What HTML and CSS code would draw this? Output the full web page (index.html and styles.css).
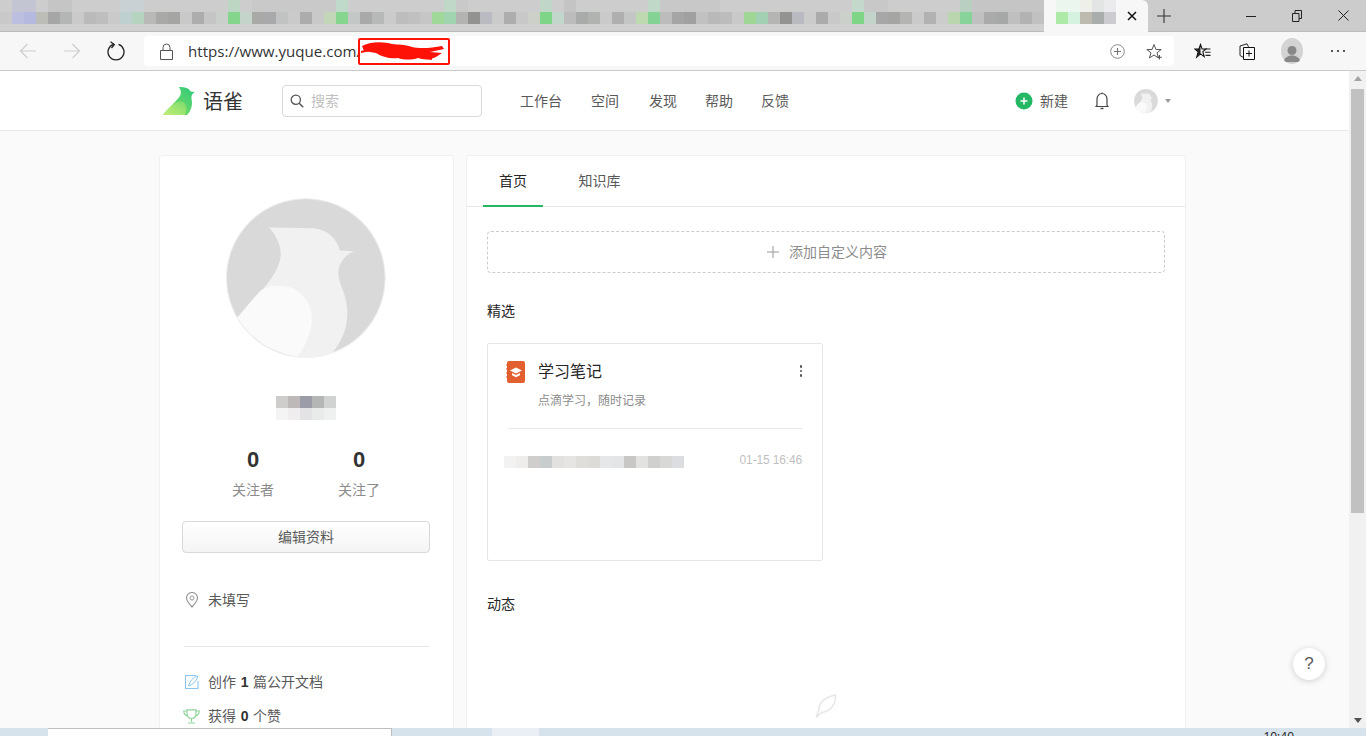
FILE: index.html
```html
<!DOCTYPE html>
<html lang="zh-CN">
<head>
<meta charset="utf-8">
<title>语雀</title>
<link rel="stylesheet" href="styles.css">
</head>
<body>
<div class="tabstrip">
  <div class="tabs-blur"></div>
  <div class="tab-active">
    <span class="tab-blur"></span>
    <svg class="tab-x" width="10" height="10" viewBox="0 0 10 10"><path d="M1 1l8 8M9 1l-8 8" stroke="#111" stroke-width="1.5" fill="none"/></svg>
  </div>
  <div class="newtab"><svg width="14" height="14" viewBox="0 0 14 14"><path d="M7 0v14M0 7h14" stroke="#333" stroke-width="1.1" fill="none"/></svg></div>
  <div class="winctl">
    <span class="winbtn"><svg width="10" height="10" viewBox="0 0 10 10"><path d="M0 5.5h10" stroke="#222" fill="none"/></svg></span>
    <span class="winbtn"><svg width="10" height="12" viewBox="0 0 10 12"><path d="M.5 3.5h6.5v8H.5zM3 3.5V.5h6.5v8H7" stroke="#222" fill="none"/></svg></span>
    <span class="winbtn"><svg width="11" height="11" viewBox="0 0 11 11"><path d="M.5.5l10 10M10.500.5l-10 10" stroke="#222" fill="none"/></svg></span>
  </div>
</div>

<div class="toolbar">
  <span class="tbtn"><svg width="18" height="16" viewBox="0 0 18 16"><path d="M17 8H1.500M8.500 1L1.500 8l7 7" stroke="#cdcdcd" stroke-width="1.200" fill="none"/></svg></span>
  <span class="tbtn"><svg width="18" height="16" viewBox="0 0 18 16"><path d="M1 8h15.500M9.500 1l7 7-7 7" stroke="#cdcdcd" stroke-width="1.200" fill="none"/></svg></span>
  <span class="tbtn"><svg width="18" height="20" viewBox="0 0 18 20"><path d="M6.500 3.300A8 8 0 1 0 11.500 3.300" stroke="#222" stroke-width="1.300" fill="none"/><path d="M3.500 .8L7.300 3.600 4.500 7" stroke="#222" stroke-width="1.300" fill="none"/></svg></span>
  <div class="address">
    <svg class="lock" width="13" height="17" viewBox="0 0 13 17"><path d="M3 7V4.500a3.500 3.500 0 0 1 7 0V7M.5 7.500h12v9H.5z" stroke="#555" stroke-width="1" fill="none"/></svg>
    <span class="url">https://www.yuque.com/</span>
    <span class="redact"><svg width="88" height="23" viewBox="0 0 88 23"><path d="M2 6C12 1 24 2 32 4c6 1 12 0 20 3 8 2 20 1 30-1l2 3-14 3 12 1-6 4c-6 3-12 3-18 1-6 2-14 2-20 0-8 1-16-1-22-5L4 11z" fill="#fe1208"/><path d="M1 12l18-4M60 17l12 2" stroke="#fe1208" stroke-width="2" fill="none"/></svg></span>
    <span class="addr-icons">
      <svg width="15" height="15" viewBox="0 0 15 15"><circle cx="7.500" cy="7.500" r="6.800" stroke="#888" fill="none"/><path d="M7.500 4v7M4 7.500h7" stroke="#777" stroke-width="1.200" fill="none"/></svg>
      <svg width="17" height="17" viewBox="0 0 17 17"><path d="M8 1.500l2 5h5.200l-4.200 3.300 1.600 5.200L8 12l-4.600 3 1.600-5.200L.8 6.500H6z" stroke="#555" fill="none"/><path d="M13.500 12v4.500M11.200 14.300h4.600" stroke="#555" fill="none"/></svg>
    </span>
  </div>
  <div class="tb-right">
    <span class="tbtn"><svg width="17" height="17" viewBox="0 0 17 17"><path d="M6.500 1.500l1.600 4.500h3.900L8.800 8.700l1.400 5-3.700-2.800-3.800 3.300L4.200 8.700.8 6h4.100z" stroke="#111" stroke-width="1.100" fill="none"/><path d="M6.500 1.500L4.900 6H.8l3.400 2.700-1.500 5.500 3.800-3.300z" fill="#222"/><path d="M11 6h5.500M11 9.200h5.500M11.500 12.400h5" stroke="#222" stroke-width="1.100" fill="none"/></svg></span>
    <span class="tbtn"><svg class="coll-icon" width="16" height="17" viewBox="0 0 16 17"><path d="M4.500 14.500L1 12.500 1 3 8 .8l1.500 3" stroke="#222" fill="none"/><path d="M4.500 4.500h11v12h-11zM10 7.500v6M7 10.500h6" stroke="#111" fill="none"/></svg></span>
    <span class="profile"><svg width="22" height="22" viewBox="0 0 22 22"><circle cx="11" cy="8.500" r="4.500" fill="#888"/><path d="M2.500 20c1-5 5-6.500 8.500-6.500s7.500 1.500 8.500 6.500z" fill="#888"/></svg></span>
    <span class="tbtn"><svg width="16" height="4" viewBox="0 0 16 4"><circle cx="2" cy="2" r="1.100" fill="#333"/><circle cx="8" cy="2" r="1.100" fill="#333"/><circle cx="14" cy="2" r="1.100" fill="#333"/></svg></span>
  </div>
</div>

<div class="main">
  <div class="page">
    <header class="header">
      <svg class="logo" width="32" height="28" viewBox="0 0 32 28"><defs><linearGradient id="lg1" x1="1" y1="0" x2="0" y2="1"><stop offset="0" stop-color="#2cc97c"/><stop offset="1" stop-color="#8ee05e"/></linearGradient><linearGradient id="lg2" x1="1" y1="0" x2="0" y2="1"><stop offset="0" stop-color="#7bdc6c"/><stop offset="1" stop-color="#c4ee78"/></linearGradient></defs><path d="M16 0C22 0 26 1 27.500 4.500L32 5C29 6.500 28 9 28.500 12 30 18 28 24 24 28H0C4 22 12 16 17 9 18.500 6 18 3 16 0Z" fill="url(#lg1)"/><path d="M0 28C6 21 11 15 17 14.500 23 14 25.500 22 21.500 28Z" fill="url(#lg2)"/></svg>
      <span class="brand">语雀</span>
      <div class="search">
        <svg width="14" height="14" viewBox="0 0 14 14"><circle cx="5.800" cy="5.800" r="4.600" stroke="#555" stroke-width="1.300" fill="none"/><path d="M9.200 9.200l4 4" stroke="#555" stroke-width="1.500" fill="none"/></svg>
        <span class="placeholder">搜索</span>
      </div>
      <nav class="nav">
        <a class="nav-item nav-w1">工作台</a>
        <a class="nav-item nav-w2">空间</a>
        <a class="nav-item">发现</a>
        <a class="nav-item">帮助</a>
        <a class="nav-item">反馈</a>
      </nav>
      <div class="hdr-right">
        <span class="new-btn"><svg width="18" height="18" viewBox="0 0 18 18"><circle cx="9" cy="9" r="8.500" fill="#25b864"/><path d="M9 5.500v7M5.500 9h7" stroke="#fff" stroke-width="1.500" fill="none"/></svg><span class="new-label">新建</span></span>
        <svg class="bell" width="14" height="18" viewBox="0 0 14 18"><path d="M1 14.500h12l-1-1.500V7a5 5.500 0 0 0-10 0v6z" stroke="#444" stroke-width="1.200" fill="none"/><path d="M5.500 16.500h3" stroke="#444" stroke-width="1.400" fill="none"/><path d="M7 .5v1.500" stroke="#444" fill="none"/></svg>
        <svg class="mini-avatar" width="24" height="24" viewBox="200 55 477 478"><use href="#bird"/></svg>
        <span class="caret"></span>
      </div>
    </header>

    <div class="cols">
      <aside class="card profile-card">
        <svg class="avatar" width="160" height="160" viewBox="200 55 477 478">
          <g id="bird">
            <circle cx="438" cy="294" r="237" fill="#d9d9d9" stroke="#eeeeee" stroke-width="3"/>
            <path d="M328 143L460 145C500 147 530 175 540 212L582 214C555 225 535 250 535 280 537 320 562 340 562 400 562 450 540 490 517 518 490 528 460 533 438 532 380 533 290 490 234 412 290 350 365 280 363 220 362 190 345 160 328 143Z" fill="#f1f1f1"/>
            <path d="M234 412C260 380 290 345 305 330 330 315 370 313 400 325 440 345 458 385 456 420 455 460 435 500 413 528 340 520 270 475 234 412Z" fill="#fafafa"/>
          </g>
        </svg>
        <div class="name-blur"></div>
        <div class="stats">
          <div class="stat"><b class="stat-num">0</b><span class="stat-label">关注者</span></div>
          <div class="stat"><b class="stat-num">0</b><span class="stat-label">关注了</span></div>
        </div>
        <button class="edit-btn">编辑资料</button>
        <div class="info-row location">
          <svg width="14" height="16" viewBox="0 0 14 16"><path d="M7 15C3.500 11 1.500 8.500 1.500 6a5.500 5.500 0 0 1 11 0c0 2.500-2 5-5.500 9z" stroke="#999" stroke-width="1.200" fill="none"/><circle cx="7" cy="6" r="2" stroke="#999" fill="none"/></svg>
          <span>未填写</span>
        </div>
        <div class="rule"></div>
        <div class="info-row doc-row">
          <svg width="14" height="14" viewBox="0 0 14 14"><path d="M11 .5H.5v13h12.500V6" stroke="#8cc4ee" stroke-width="1.100" fill="none"/><path d="M13 1C8 2 5 6 3.500 11 7 10 11 7 13 1z" stroke="#8cc4ee" fill="none"/></svg>
          <span>创作 <b>1</b> 篇公开文档</span>
        </div>
        <div class="info-row like-row">
          <svg width="17" height="15" viewBox="0 0 17 15"><path d="M4 .8h9v4c0 3-2 4.700-4.500 4.700S4 7.800 4 4.800zM4 2H.8c0 3 1 4.500 4 5M13 2h3.200c0 3-1 4.500-4 5M8.500 9.500v3.500M5 14h7" stroke="#8fd398" stroke-width="1.200" fill="none"/></svg>
          <span>获得 <b>0</b> 个赞</span>
        </div>
      </aside>

      <section class="card content-card">
        <div class="tabs">
          <span class="tab tab-on">首页</span>
          <span class="tab">知识库</span>
        </div>
        <div class="content-body">
          <div class="add-box"><svg width="12" height="12" viewBox="0 0 12 12"><path d="M6 0v12M0 6h12" stroke="#999" fill="none"/></svg><span class="add-label">添加自定义内容</span></div>
          <h3 class="section-title">精选</h3>
          <div class="book">
            <div class="book-head">
              <svg class="book-icon" width="20" height="22" viewBox="0 0 20 22"><rect x="1" y="0" width="18" height="22" rx="2" fill="#e25f30"/><path d="M0 4h2M0 8h2M0 12h2M0 16h2" stroke="#e25f30" fill="none"/><path d="M10 6.500l6 3-6 3-6-3z" fill="#fff"/><path d="M6 12l4 2 4-2v2.300l-4 2-4-2z" fill="#fff"/></svg>
              <div class="book-titles">
                <div class="book-title">学习笔记</div>
                <div class="book-sub">点滴学习，随时记录</div>
              </div>
              <span class="kebab"><i></i><i></i><i></i></span>
            </div>
            <div class="book-rule"></div>
            <div class="book-doc">
              <div class="doc-blur"></div>
              <span class="doc-date">01-15 16:46</span>
            </div>
          </div>
          <h3 class="section-title feed-title">动态</h3>
          <div class="empty"><svg width="22" height="24" viewBox="0 0 22 24"><path d="M1.500 23C2 20 3 18 4 16 3 10 9 3 20.500 1 21 9 17 17 7 18.500 5 19.500 3.500 21 1.500 23z" stroke="#e6e6e6" stroke-width="1.500" fill="none"/></svg></div>
        </div>
      </section>
    </div>
  </div>
  <div class="scrollbar">
    <span class="arrow-up"></span>
    <span class="thumb"></span>
    <span class="arrow-down"></span>
  </div>
  <div class="help">?</div>
</div>

<footer class="taskbar">
  <div class="task-input"></div>
  <div class="task-seg"></div>
  <span class="clock">10:40</span>
</footer>
</body>
</html>
```
FILE: styles.css
```css
* { box-sizing: border-box; }
html, body { margin: 0; height: 100%; }
body {
  width: 1366px; height: 736px; overflow: hidden;
  display: flex; flex-direction: column;
  font-family: "Noto Sans CJK SC", "Liberation Sans", sans-serif;
  font-size: 14px; color: #595959; background: #fafafa;
}
svg { display: block; flex: none; }

/* tab strip */
.tabstrip { height: 32px; flex: none; display: flex; background: #cccccc; border-bottom: 1px solid #bcbcbc; }
.tabs-blur {
  width: 1044px; height: 31px; flex: none;
  background-color: #d0d0d0;
  background-repeat: no-repeat;
  background-size: 1044px 12px, 1044px 12px;
  background-position: 0 12px, 0 0;
  background-image:
    linear-gradient(90deg,#c9c9c9 0 12px,#bcbfe0 0 24px,#b5b8df 0 36px,#bdbdb8 0 48px,#a6a6a6 0 60px,#b4b6b6 0 72px,#cacaca 0 84px,#bababa 0 96px,#bebebe 0 108px,#cacaca 0 120px,#bfd0d0 0 132px,#b6d3bf 0 144px,#b9b9b7 0 156px,#a9a9a7 0 168px,#a5a5a4 0 180px,#c9c9c9 0 192px,#adadad 0 204px,#c5c5c5 0 216px,#cbcfcb 0 228px,#86d58c 0 240px,#c4d4ca 0 252px,#a9a9a7 0 264px,#a9a8ab 0 276px,#c0c3c2 0 288px,#cacaca 0 300px,#acacac 0 312px,#c9c9c9 0 324px,#c3d7b8 0 336px,#86d58f 0 348px,#c3c7c5 0 360px,#a9a9a9 0 372px,#b6b9b8 0 384px,#cbcbcb 0 396px,#bdbdbd 0 408px,#c0c0c0 0 420px,#c6c6c6 0 432px,#9fd898 0 444px,#a0d4b0 0 456px,#b3b3b1 0 468px,#929290 0 480px,#b9bbc0 0 492px,#cbcbcb 0 504px,#adadad 0 516px,#c8c8c8 0 528px,#ccd0c8 0 540px,#7fd587 0 552px,#c3d6cc 0 564px,#bcbcbc 0 576px,#a9abaa 0 588px,#b1b3b1 0 600px,#cacaca 0 612px,#afafaf 0 624px,#c4c6c6 0 636px,#bed8b0 0 648px,#84d394 0 660px,#bcbcbc 0 672px,#a5a5a5 0 684px,#a0a0a0 0 696px,#c1c1c1 0 708px,#b9b9b9 0 720px,#bcbcbc 0 732px,#c9c9c9 0 744px,#9fd695 0 756px,#a1d0b2 0 768px,#b5b5b3 0 780px,#939391 0 792px,#b8babf 0 804px,#cbcbcb 0 816px,#ababab 0 828px,#c9c9c9 0 840px,#ccd0cb 0 852px,#7fd586 0 864px,#c3d5cb 0 876px,#a7a7a7 0 888px,#a5a5a4 0 900px,#b4b4b2 0 912px,#cacaca 0 924px,#b2b2b2 0 936px,#cccccc 0 948px,#b9d6ae 0 960px,#88d399 0 972px,#c0c0c0 0 984px,#aaaaaa 0 996px,#a6a8a7 0 1008px,#bfbfbf 0 1020px,#b2b2b2 0 1032px,#c1c1c1 0 1044px),
    linear-gradient(90deg,#cdcdcd 0 12px,#c4c5d2 0 36px,#cdcdcd 0 48px,#c5c5c5 0 72px,#cdcdcd 0 120px,#c9d1d4 0 144px,#cdcdcd 0 228px,#bdd6c4 0 240px,#cdcdcd 0 252px,#c9c9c9 0 336px,#bfd9cb 0 348px,#cdcdcd 0 444px,#c0d8c8 0 456px,#c9c9c9 0 468px,#cdcdcd 0 540px,#bfd6c8 0 552px,#cdcdcd 0 564px,#c4c4c4 0 576px,#cdcdcd 0 648px,#c0d8c8 0 660px,#c8c8c8 0 720px,#cdcdcd 0 852px,#c4d8cc 0 864px,#c8c8c8 0 888px,#cdcdcd 0 960px,#b8cfc2 0 972px,#c5c5c5 0 1044px);
}
.tab-active {
  width: 104px; height: 32px; flex: none; position: relative;
  display: flex; align-items: center; justify-content: flex-end; padding-right: 11px;
  background: #f7f7f7; border-top-right-radius: 6px; margin-bottom: -1px;
}
.tab-blur {
  position: absolute; left: 12px; top: 0; width: 60px; height: 24px;
  background-repeat: no-repeat;
  background-size: 60px 12px, 60px 12px;
  background-position: 0 12px, 0 0;
  background-image:
    linear-gradient(90deg,#adeaa8 0 12px,#d5f1df 0 24px,#bdbab0 0 36px,#a9adac 0 48px,#cbcbd0 0 60px),
    linear-gradient(90deg,#eaf6ee 0 24px,#efefe9 0 36px,#e3e5e5 0 48px,#ebebed 0 60px);
}
.newtab { width: 32px; display: flex; align-items: center; justify-content: center; height: 31px; }
.winctl { margin-left: auto; display: flex; height: 31px; }
.winbtn { width: 46px; display: flex; align-items: center; justify-content: center; }

/* toolbar */
.toolbar {
  height: 39px; flex: none; display: flex; align-items: center;
  padding-left: 6px; background: #f7f7f7; border-bottom: 1px solid #c9c9c9;
}
.tbtn { width: 44px; height: 30px; display: flex; align-items: center; justify-content: center; flex: none; }
.address {
  position: relative; width: 1030px; height: 30px; margin-left: 6px; flex: none;
  display: flex; align-items: center; padding-left: 16px;
  background: #fff; border-radius: 4px;
}
.url {
  margin-left: 15px; font-family: "Open Sans", "Liberation Sans", sans-serif;
  font-size: 15.100px; color: #333; white-space: nowrap;
}
.redact {
  position: absolute; left: 214px; top: 2px; width: 92px; height: 27px;
  display: flex; align-items: center; justify-content: center;
  background: #fff; border: 2px solid #fe1208; border-radius: 2px;
}
.addr-icons { margin-left: auto; padding-right: 11px; display: flex; align-items: center; gap: 21px; }
.tb-right { display: flex; margin-left: 6px; }
.tb-right .tbtn { width: 45px; }
.coll-icon { margin-left: -2px; }
.profile {
  width: 22px; height: 26px; margin: 2px 12px 0 11px; overflow: hidden;
  border-radius: 50%; background: #d3d3d3; display: flex; align-items: flex-end;
}

/* main */
.main { position: relative; flex: 1; min-height: 0; display: flex; overflow: hidden; }
.page { flex: 1; min-width: 0; display: flex; flex-direction: column; overflow: hidden; }
.scrollbar {
  width: 17px; flex: none; display: flex; flex-direction: column; align-items: center;
  background: #f1f1f1; padding-top: 5px;
}
.arrow-up { width: 0; height: 0; border: 4px solid transparent; border-top: 0; border-bottom: 5px solid #a3a3a3; }
.thumb { width: 13px; height: 424px; margin-top: 8px; background: #c1c1c1; }
.arrow-down { width: 0; height: 0; margin-top: auto; margin-bottom: 5px; border: 4px solid transparent; border-bottom: 0; border-top: 5px solid #505050; }

.header {
  height: 60px; flex: none; display: flex; align-items: center;
  padding-left: 163px; padding-right: 178px;
  background: #fff; border-bottom: 1px solid #e8e8e8;
}
.logo { margin-top: 1px; }
.brand { margin-left: 8px; width: 79px; font-size: 20px; color: #333; line-height: 28px; flex: none; }
.search {
  width: 200px; height: 32px; flex: none; display: flex; align-items: center; gap: 7px;
  padding-left: 7px; border: 1px solid #d9d9d9; border-radius: 4px; background: #fff;
}
.placeholder { color: #bfbfbf; margin-bottom: 2px; }
.nav { display: flex; gap: 28px; margin-left: 38px; padding-bottom: 2px; }
.nav-item { color: #595959; line-height: 22px; white-space: nowrap; }
.nav-w1 { margin-right: 1px; }
.nav-w2 { margin-right: 2px; }
.hdr-right { margin-left: auto; display: flex; align-items: center; }
.new-btn { display: flex; align-items: center; gap: 7px; color: #595959; }
.new-label { margin-bottom: 2px; }
.bell { margin-left: 27px; }
.mini-avatar { margin-left: 25px; }
.caret { width: 0; height: 0; margin-left: 7px; border: 3px solid transparent; border-bottom: 0; border-top: 4px solid #999; }

.cols { flex: 1; min-height: 0; display: flex; gap: 12px; padding: 24px 0 0 159px; }
.card { background: #fff; border: 1px solid #f0f0f0; border-bottom: 0; border-radius: 4px 4px 0 0; flex: none; overflow: hidden; }

.profile-card { width: 295px; padding: 42px 23px 0 22px; display: flex; flex-direction: column; }
.avatar { margin: 0 0 0 44px; }
.name-blur {
  width: 60px; height: 24px; margin: 38px 0 0 94px; flex: none;
  background-repeat: no-repeat; background-size: 60px 12px, 60px 12px; background-position: 0 0, 0 12px;
  background-image:
    linear-gradient(90deg,#cfcccc 0 12px,#bdb9b9 0 24px,#9b9ca8 0 36px,#b3b6b5 0 48px,#d0d3d2 0 60px),
    linear-gradient(90deg,#f4f4f4 0 12px,#efeded 0 24px,#e3e3e5 0 36px,#e9ebea 0 48px,#eff1f0 0 60px);
}
.stats { display: flex; margin-top: 26px; padding-left: 50px; gap: 64px; flex: none; }
.stat { width: 42px; display: flex; flex-direction: column; align-items: center; }
.stat-num { font-family: "Liberation Sans", sans-serif; font-size: 22px; line-height: 28px; font-weight: 700; color: #333; }
.stat-label { margin-top: 5px; line-height: 20px; color: #8c8c8c; white-space: nowrap; }
.edit-btn {
  width: 248px; height: 32px; margin-top: 22px; flex: none; padding: 0 0 2px;
  font: inherit; color: #595959;
  border: 1px solid #d9d9d9; border-radius: 4px;
  background: linear-gradient(#ffffff, #f4f4f4);
}
.info-row { display: flex; align-items: center; height: 22px; padding-left: 3px; color: #595959; white-space: nowrap; flex: none; word-spacing: 1.500px; }
.info-row span { margin-bottom: 2px; }
.info-row b { color: #333; font-family: "Liberation Sans", sans-serif; }
.location { margin-top: 36px; gap: 9px; }
.rule { height: 1px; margin: 35px 1px 0 2px; background: #e8e8e8; flex: none; }
.doc-row { margin-top: 24px; gap: 9px; }
.like-row { margin-top: 12px; gap: 8px; padding-left: 1px; }

.content-card { width: 720px; display: flex; flex-direction: column; }
.tabs { height: 51px; flex: none; display: flex; padding-left: 16px; border-bottom: 1px solid #e8e8e8; }
.tab { height: 51px; width: 60px; margin-right: 35px; text-align: center; line-height: 48px; color: #595959; }
.tab:last-child { width: 43px; }
.tab-on { color: #262626; border-bottom: 2px solid #25b864; }
.content-body { padding: 24px 20px 0; }
.add-box {
  height: 42px; display: flex; align-items: center; justify-content: center; gap: 10px; padding-left: 2px;
  border: 1px dashed #cccccc; border-radius: 4px; color: #8c8c8c;
}
.add-label { margin-bottom: 2px; }
.section-title { margin: 27px 0 0; font-size: 14px; line-height: 20px; font-weight: 400; color: #262626; }
.book { width: 336px; height: 218px; margin-top: 23px; border: 1px solid #e6e6e6; border-radius: 2px; padding: 0 20px 0 18px; }
.book-head { display: flex; padding-top: 17px; position: relative; }
.book-icon { margin-right: 12px; }
.book-titles { flex: 1; }
.book-title { margin-top: -1px; font-size: 16px; line-height: 20px; color: #262626; }
.book-sub { margin-top: 11px; font-size: 12px; line-height: 18px; color: #8c8c8c; }
.kebab { display: flex; flex-direction: column; gap: 2px; padding-top: 4px; }
.kebab i { width: 2.500px; height: 2.500px; border-radius: 50%; background: #555; }
.book-rule { height: 1px; margin: 19px 0 0 2px; background: #e8e8e8; }
.book-doc { display: flex; align-items: center; justify-content: space-between; margin: 26px 0 0 -2px; height: 14px; }
.doc-blur {
  width: 180px; height: 12px;
  background-image: linear-gradient(90deg,#f2f2f2 0 12px,#eeedeb 0 24px,#cfcecc 0 36px,#c9cccd 0 48px,#e3e1df 0 60px,#e7e5e3 0 72px,#dfdedb 0 84px,#dddbd8 0 96px,#e6e7e9 0 108px,#e4e5e7 0 120px,#c8c7c6 0 132px,#e2e2e0 0 144px,#d0d0ce 0 156px,#d8d8d6 0 168px,#dcdde0 0 180px);
}
.doc-date { font-family: "Liberation Sans", sans-serif; font-size: 12px; letter-spacing: -.150px; margin-bottom: 4px; color: #bfbfbf; }
.feed-title { margin-top: 32px; }
.empty { display: flex; justify-content: center; margin-top: 81px; }

.help {
  position: absolute; right: 41px; top: 577px; width: 32px; height: 32px;
  display: flex; align-items: center; justify-content: center;
  border-radius: 50%; background: #fff; box-shadow: 0 1px 6px rgba(0,0,0,.18);
  font-family: "Liberation Sans", sans-serif; font-size: 17px; color: #595959;
}

/* taskbar */
.taskbar { height: 8px; flex: none; display: flex; overflow: hidden; background: #d6e3ed; padding-left: 48px; position: relative; }
.task-input { width: 344px; height: 8px; background: #fff; border-top: 1px solid #bdbdbd; border-right: 1px solid #bdbdbd; flex: none; }
.task-seg { width: 47px; margin-left: 100px; background: #e9eff5; flex: none; }
.clock { margin-left: auto; margin-right: 72px; margin-top: 2px; font-family: "Open Sans", sans-serif; font-size: 12px; line-height: 14px; color: #222; }
```
